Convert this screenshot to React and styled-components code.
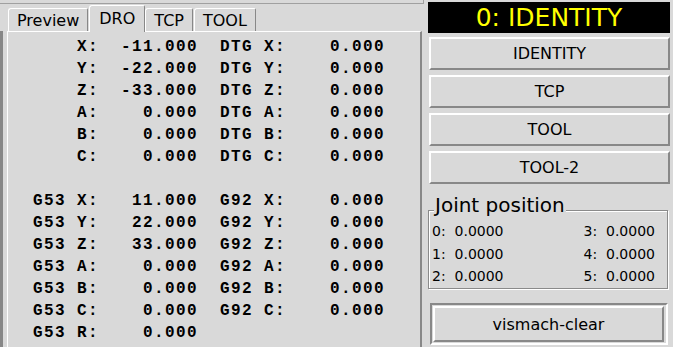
import styled, { createGlobalStyle } from 'styled-components'

const GlobalStyle = createGlobalStyle`
  html, body {
    margin: 0;
    padding: 0;
    background: #d9d9d9;
    overflow: hidden;
  }
  body {
    font-family: "DejaVu Sans", sans-serif;
    color: #000;
  }
`

const tabs = ['Preview', 'DRO', 'TCP', 'TOOL']

const droLines = [
    '    X:  -11.000  DTG X:    0.000',
    '    Y:  -22.000  DTG Y:    0.000',
    '    Z:  -33.000  DTG Z:    0.000',
    '    A:    0.000  DTG A:    0.000',
    '    B:    0.000  DTG B:    0.000',
    '    C:    0.000  DTG C:    0.000',
    '',
    'G53 X:   11.000  G92 X:    0.000',
    'G53 Y:   22.000  G92 Y:    0.000',
    'G53 Z:   33.000  G92 Z:    0.000',
    'G53 A:    0.000  G92 A:    0.000',
    'G53 B:    0.000  G92 B:    0.000',
    'G53 C:    0.000  G92 C:    0.000',
    'G53 R:    0.000',
]

const kinematics = ['IDENTITY', 'TCP', 'TOOL', 'TOOL-2']

// grid fills row by row: 0 3 / 1 4 / 2 5
const joints = [0, 3, 1, 4, 2, 5]

const App = () => {
    return (
        <>
            <GlobalStyle />
            <Screen>
                <LeftColumn>
                    <TopSliver />
                    <TabBar>
                        {tabs.map(t => (
                            <Tab key={t} $active={t === 'DRO'}>{t}</Tab>
                        ))}
                    </TabBar>
                    <BodyRow>
                        <Rail />
                        <Pane>
                            <DroText>{droLines.join('\n')}</DroText>
                        </Pane>
                    </BodyRow>
                </LeftColumn>
                <RightColumn>
                    <ModeLabel>0: IDENTITY</ModeLabel>
                    <ButtonStack>
                        {kinematics.map(k => (
                            <RaisedButton key={k}>{k}</RaisedButton>
                        ))}
                    </ButtonStack>
                    <Group>
                        <GroupTitle>Joint position</GroupTitle>
                        <JointGrid>
                            {joints.map(j => (
                                <JointValue key={j}>{`${j}:  0.0000`}</JointValue>
                            ))}
                        </JointGrid>
                    </Group>
                    <DefaultRing>
                        <RaisedButton $tall>vismach-clear</RaisedButton>
                    </DefaultRing>
                </RightColumn>
            </Screen>
        </>
    )
}

const Screen = styled.div`
    width: 673px;
    height: 347px;
    display: flex;
    overflow: hidden;
`

const LeftColumn = styled.div`
    width: 422px;
    display: flex;
    flex-direction: column;
    flex-shrink: 0;
`

const TopSliver = styled.div`
    height: 3px;
    width: 423px;
    border-bottom: 1px solid #a0a0a0;
    border-right: 1px solid #a0a0a0;
`

const TabBar = styled.div`
    height: 27px;
    display: flex;
    align-items: flex-end;
    padding-left: 8px;
    position: relative;
    z-index: 1;
`

const Tab = styled.div`
    height: ${p => (p.$active ? '27px' : '23px')};
    margin-bottom: ${p => (p.$active ? '-1px' : '0')};
    padding: 0 ${p => (p.$active ? '9px' : '8px')};
    margin-right: ${p => (p.$active ? '0' : '1px')};
    border-left: 1px solid #fff;
    border-top: 1px solid #fff;
    border-right: 1px solid #888;
    border-radius: 3px 2px 0 0;
    background: #d9d9d9;
    font-size: 16px;
    line-height: ${p => (p.$active ? '26px' : '23px')};
    box-sizing: border-box;
    white-space: nowrap;
`

const BodyRow = styled.div`
    flex: 1;
    display: flex;
`

const Rail = styled.div`
    width: 3px;
    background: #878787;
    margin-right: 4px;
`

const Pane = styled.div`
    flex: 1;
    border-top: 1px solid #fff;
    border-left: 1px solid #fff;
    border-right: 2px solid #888;
    padding: 4px 0 0 25px;
`

const DroText = styled.pre`
    margin: 0;
    font-family: "Liberation Mono", monospace;
    font-weight: bold;
    font-size: 16px;
    letter-spacing: 1.4px;
    line-height: 22px;
    color: #000;
`

const RightColumn = styled.div`
    flex: 1;
    display: flex;
    flex-direction: column;
    padding: 2px 3px 0 6px;
`

const ModeLabel = styled.div`
    height: 31px;
    background: #000;
    color: #ffff00;
    font-size: 25px;
    line-height: 31px;
    text-align: center;
    white-space: nowrap;
`

const ButtonStack = styled.div`
    display: flex;
    flex-direction: column;
    gap: 5px;
    margin: 4px 0 0 1px;
`

const RaisedButton = styled.button`
    height: ${p => (p.$tall ? '36px' : '33px')};
    width: 100%;
    border: 2px solid;
    border-color: #fff #888 #888 #fff;
    background: #d9d9d9;
    font-family: "DejaVu Sans", sans-serif;
    font-size: 16px;
    color: #000;
    padding: 0;
`

const Group = styled.div`
    position: relative;
    margin: 26px 2px 0 0;
    border: 1px solid #8a8a8a;
    box-shadow: 1px 1px 0 #fff, inset 1px 1px 0 #fff;
    padding: 9px 12px 0 3px;
    height: 68px;
`

const GroupTitle = styled.span`
    position: absolute;
    top: -17px;
    left: 5px;
    padding: 0 1px;
    background: #d9d9d9;
    font-size: 20px;
    line-height: 23px;
`

const JointGrid = styled.div`
    display: grid;
    grid-template-columns: auto auto;
    justify-content: space-between;
`

const JointValue = styled.div`
    font-size: 14px;
    line-height: 22.5px;
    white-space: pre;
`

const DefaultRing = styled.div`
    margin: 14px 2px 0 2px;
    border: 2px solid;
    border-color: #888 #fff #fff #888;
    padding: 1px 2px 1px 1px;
`

export default App
